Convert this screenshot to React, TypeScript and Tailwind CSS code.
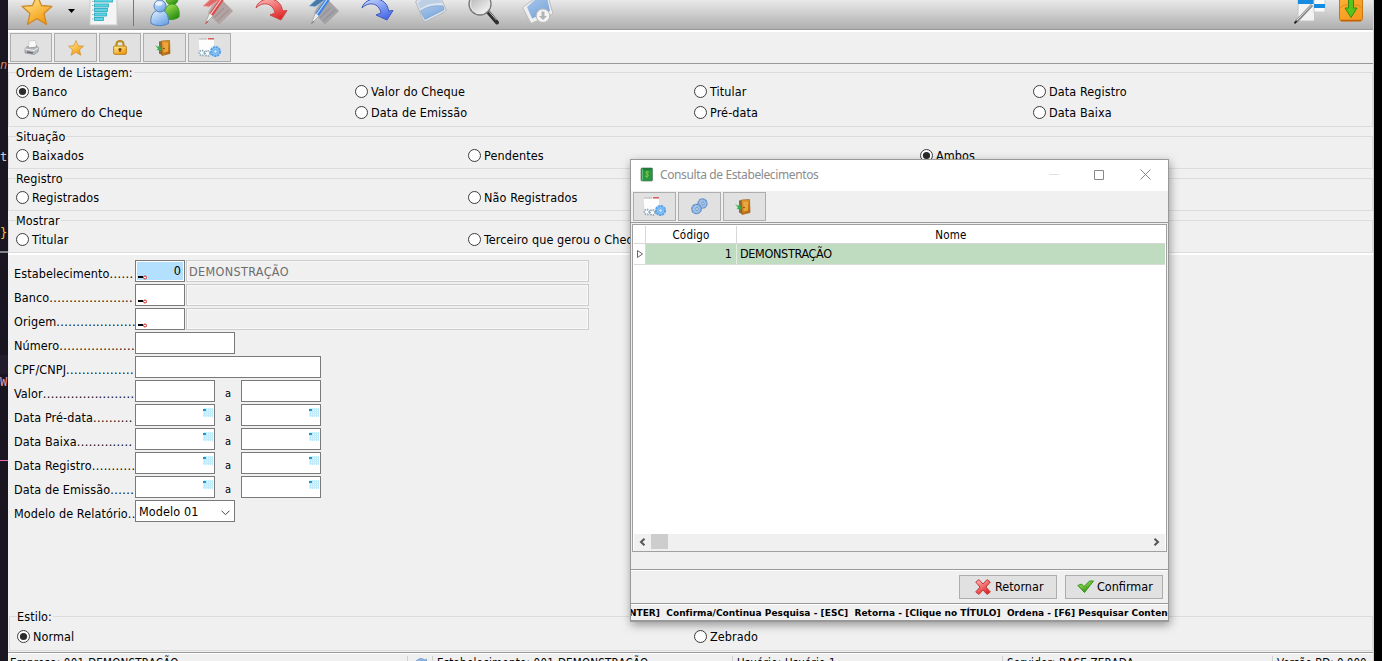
import React from "react";

type IconProps = { className?: string };

function Defs() {
  const g = (id: string, a: string, b: string) => (
    <linearGradient id={id} x1="0" y1="0" x2="0.6" y2="1">
      <stop offset="0" stopColor={a} />
      <stop offset="1" stopColor={b} />
    </linearGradient>
  );
  return (
    <svg width="0" height="0" className="absolute">
      <defs>
        {g("gold", "#fff3a0", "#f59a10")}
        {g("blue", "#eaf4ff", "#6fa6e6")}
        {g("green", "#b4ee5c", "#2a8f10")}
        {g("red", "#ffc0c0", "#e02828")}
        {g("indigo", "#c8d8ff", "#4a6ce8")}
        {g("silver", "#8f8f8f", "#ffffff")}
        {g("wood", "#f0a838", "#b86810")}
        {g("orange", "#ffb23a", "#f59a1c")}
        {g("pane", "#a9c8ec", "#7aa6da")}
      </defs>
    </svg>
  );
}

function Star({ className }: IconProps) {
  return (
    <svg viewBox="0 0 32 32" className={className}>
      <path d="M16 1 L20.5 11.5 L31 12.3 L23 19.5 L25.5 30.5 L16 24.6 L6.5 30.5 L9 19.5 L1 12.3 L11.5 11.5Z" fill="url(#gold)" stroke="#cf8a2c" strokeWidth="1.3" strokeLinejoin="round" />
    </svg>
  );
}

function BarsPage() {
  return (
    <svg width="30" height="26" viewBox="0 0 30 26">
      <rect x="1" y="-2" width="27" height="27" fill="#f4f4f4" stroke="#c9c9c9" />
      <g fill="#5cd6e4" stroke="#22a5bb" strokeWidth=".8">
        <rect x="5.500" y="-2" width="18" height="4" />
        <rect x="5.500" y="4" width="14" height="3" />
        <rect x="5.500" y="8.500" width="13" height="3" />
        <rect x="5.500" y="13" width="12" height="3" />
        <rect x="5.500" y="17.500" width="9" height="3" />
      </g>
      <path d="M3 1.500h1.500M3 5.500h1.500M3 10h1.500M3 14.500h1.500M3 19h1.500" stroke="#aaa" />
    </svg>
  );
}

function Users() {
  return (
    <svg width="32" height="27" viewBox="0 0 32 27">
      <circle cx="22" cy="-1" r="6" fill="url(#green)" stroke="#3c9a20" />
      <path d="M14 19 C13 9 18 4 22 4 C27 4 30 9 29 17 Q24 21 14 19Z" fill="url(#green)" stroke="#3c9a20" />
      <path d="M1 23.500 C0 15 4 10 10 10 C16 10 19 15 18.500 23.500 Q10 28 1 23.500Z" fill="url(#blue)" stroke="#5482bd" />
      <circle cx="10" cy="6" r="6" fill="url(#blue)" stroke="#5482bd" />
      <ellipse cx="9" cy="3.500" rx="3.500" ry="2" fill="#fff" opacity=".7" />
    </svg>
  );
}

function CardPen({ tone }: { tone: "red" | "blue" }) {
  const r = tone === "red";
  return (
    <svg width="33" height="27" viewBox="0 0 33 27">
      <path d="M6 13 L16 -4 L31 11 L17 25Z" fill={r ? "#b3a4a4" : "#a4a4a8"} stroke="#bcb6b6" />
      <path d="M12 18 L22 8 M15 21 L27 10" stroke={r ? "#a69494" : "#94949a"} strokeWidth="1.500" />
      <path d="M1 6 L12 -4 L20 -2 L7 7Z" fill={r ? "#e06a6a" : "#4878a8"} stroke={r ? "#f2b0b0" : "#a9c9e8"} />
      <path d="M22 -4 L9 15" stroke={r ? "#dc4848" : "#3d80e0"} strokeWidth="4" />
      <path d="M21.500 -4 L9 14" stroke={r ? "#ffc8c8" : "#b8dafa"} strokeWidth="1.200" />
      <path d="M7.500 13 L3 24 L11 16" fill="#ededed" stroke="#999" strokeWidth=".7" />
      <path d="M5 21 L3 24.500 L6.500 21.500" fill={r ? "#cf3030" : "#777"} />
    </svg>
  );
}

function Curl({ tone }: { tone: "red" | "indigo" }) {
  const r = tone === "red";
  return (
    <svg width="33" height="22" viewBox="0 0 33 22">
      <path d="M1 8 C4 -4 26 -5 27.500 11 L32 10.500 L26 20 L15 15 L20 13 C18 3 8 1 1 8Z" fill={r ? "url(#red)" : "url(#indigo)"} stroke={r ? "#ca4848" : "#4058b8"} strokeLinejoin="round" />
    </svg>
  );
}

function Folder() {
  return (
    <svg width="32" height="23" viewBox="0 0 32 23">
      <path d="M0.500 1.500 L8 -4 H25 L31 9.500 Q31 11 29.500 12 L11 21.500 Q9 22 8 19.500Z" fill="#dde4ec" stroke="#b4b8be" strokeLinejoin="round" />
      <path d="M3 3 L9 -3 H24 L27 3 Q14 2 5 9Z" fill="#bccfe4" />
      <path d="M5.500 11 Q15 4.500 28 6 L29 9.800 L10 19.500Z" fill="url(#pane)" stroke="#6d98cc" strokeWidth=".6" />
    </svg>
  );
}

function Magnifier() {
  return (
    <svg width="32" height="26" viewBox="0 0 32 26">
      <path d="M20 12 L29 22.500" stroke="#2f2f2f" strokeWidth="4" strokeLinecap="round" />
      <path d="M20 10.500 L28.500 20" stroke="#c8c8c8" strokeWidth="1" />
      <circle cx="12" cy="4" r="11" fill="url(#silver)" fillOpacity=".75" stroke="#777" strokeWidth="1.300" />
      <circle cx="12" cy="4" r="9.500" fill="none" stroke="#e8e8e8" strokeWidth="1" />
    </svg>
  );
}

function BoxDown() {
  return (
    <svg width="32" height="25" viewBox="0 0 32 25">
      <path d="M.5 7.500 L16 -4 H26 L31 14 L9 23.500Z" fill="#eee" stroke="#bbb" strokeLinejoin="round" />
      <path d="M5 7 L16 -3 H25 L28 11 L10 18.500Z" fill="url(#pane)" />
      <circle cx="21" cy="15.700" r="6.800" fill="#f4f4f4" stroke="#b8b8b8" />
      <path d="M19.500 11.500h3v4.500h2.500l-4 4-4-4h2.500z" fill="#b3b3b3" />
    </svg>
  );
}

function NotePen() {
  return (
    <svg width="33" height="25" viewBox="0 0 33 25">
      <rect x="4" y="-4" width="16.500" height="25" fill="#f3f3f3" stroke="#c4c4c4" />
      <rect x="4" y="0" width="16" height="4" fill="#168be0" />
      <rect x="20" y="-3" width="11" height="15" fill="#fafafa" stroke="#ccc" />
      <rect x="20" y="4" width="11" height="4" fill="#168be0" />
      <path d="M18 5 L2 22" stroke="#888" strokeWidth="3" />
      <path d="M17.500 5 L3 20" stroke="#ddd" strokeWidth="1" />
      <path d="M2.500 21 L0.500 23.500" stroke="#222" strokeWidth="2" />
    </svg>
  );
}

function BoxIn() {
  return (
    <svg width="24" height="23" viewBox="0 0 24 23">
      <rect x=".5" y="-5" width="23" height="26" rx="2.500" fill="url(#orange)" stroke="#c57818" />
      <path d="M1 8 L5 5 H19 L23 8" fill="none" stroke="#e08a18" />
      <path d="M2 20.500 H22" stroke="#c46208" fill="none" strokeWidth="1.500" />
      <path d="M9.500 -4h5V8h3.500L12 17.500 6 8h3.500z" fill="#58c51d" stroke="#35890b" />
    </svg>
  );
}

function Printer() {
  return (
    <svg width="15" height="15" viewBox="0 0 15 15">
      <path d="M5 1 L11.500 .5 L12.500 7 L4.500 8Z" fill="#fafafa" stroke="#c4c8cc" strokeWidth=".8" />
      <path d="M1 8.500 L4 6 L4.500 8 L12.500 7 V5.500 L14.500 8 L14 12 L10 14.500 L1 13Z" fill="#b4b8bd" stroke="#8c8c8c" strokeWidth=".6" />
      <path d="M1 9 L10 10.500 L14 8" stroke="#f4f4f4" fill="none" />
      <path d="M3 12 L9 13" stroke="#6c6c6c" strokeWidth="1.300" />
    </svg>
  );
}

function Padlock() {
  return (
    <svg width="14" height="15" viewBox="0 0 14 15">
      <path d="M3.500 7V4a3.500 3 0 0 1 7 0v3" fill="none" stroke="#b98a18" strokeWidth="2" />
      <rect x=".7" y="6" width="12.600" height="8.300" rx="1" fill="url(#gold)" stroke="#b98018" />
      <path d="M7 8v4M5.500 9.500h3" stroke="#5b4310" strokeWidth="1.300" />
    </svg>
  );
}

function Door() {
  return (
    <svg width="16" height="16" viewBox="0 0 16 16" className="-ml-1">
      <path d="M4 1.500 L7 1 V15 L4 13.500Z" fill="#8a6a36" />
      <path d="M6.500 1 L14.500 .5 L15 13.500 L7 15.500Z" fill="url(#wood)" stroke="#9c6112" strokeWidth=".7" />
      <path d="M8.500 3 L13 2.500 V11.500 L8.500 12.500Z" fill="#eca63c" />
      <circle cx="9" cy="8.500" r=".8" fill="#6a430b" />
      <path d="M0 5 L2.800 6.800 L5 5.500 L6.500 10.500 L1.500 10 L3 8.800Z" fill="#35b04a" />
    </svg>
  );
}

function WindowGears() {
  return (
    <svg width="26" height="20" viewBox="0 0 26 20" className="-ml-px">
      <path d="M2 1 H18.500 V13 H3Z" fill="#fdfdfd" stroke="#d4d4d4" strokeWidth=".6" />
      <path d="M3 1 H11" stroke="#bbb" strokeWidth="1" />
      <rect x="12" y="0" width="6" height="1.500" fill="#d85d5d" />
      <circle cx="6" cy="15" r="2.500" fill="#fff" stroke="#8aa9bb" strokeDasharray="1.300 1" strokeWidth="2" />
      <circle cx="11.500" cy="15.500" r="2.500" fill="#fff" stroke="#8aa9bb" strokeDasharray="1.300 1" strokeWidth="2" />
      <circle cx="19.500" cy="13.500" r="4.500" fill="#8cc6f6" stroke="#5ba4ea" strokeDasharray="2.400 .6" strokeWidth="2.200" />
      <circle cx="19.500" cy="13.500" r="1.800" fill="#d4edff" stroke="#4b9de5" strokeWidth=".8" />
    </svg>
  );
}

function TwoGears() {
  return (
    <svg width="17" height="17" viewBox="0 0 17 17">
      <ellipse cx="11.500" cy="5.500" rx="4.500" ry="4.700" fill="#9cc0ea" stroke="#6a94c8" strokeDasharray="3 .4" strokeWidth="1.300" />
      <ellipse cx="5.500" cy="11" rx="4.700" ry="4.700" fill="#9cc2ec" stroke="#5f8dc2" strokeDasharray="3 .4" strokeWidth="1.300" />
      <ellipse cx="12" cy="5.500" rx="1" ry="1.600" fill="#e1ecf6" stroke="#52749c" strokeWidth=".6" />
      <ellipse cx="6" cy="11" rx="1.100" ry="1.700" fill="#e1ecf6" stroke="#52749c" strokeWidth=".6" />
    </svg>
  );
}

function Radio({ label, on }: { label: string; on?: boolean }) {
  return (
    <span className="flex h-[21px] items-center gap-[3px] whitespace-nowrap">
      <svg width="13" height="13" viewBox="0 0 13 13" className="shrink-0">
        <circle cx="6.500" cy="6.500" r="6" fill="#fff" stroke="#3c3c3c" strokeWidth="1" />
        {on && <circle cx="6.500" cy="6.500" r="3.600" fill="#2b2b2b" />}
      </svg>
      <span className="pt-px">{label}</span>
    </span>
  );
}

function Group({ legend, className, children }: { legend: string; className: string; children: React.ReactNode }) {
  return (
    <section className={"shrink-0 border border-[#dcdcdc] " + className}>
      <div className="-mt-[9px] ml-[7px] h-[17px] w-fit bg-[#f0f0f0] pr-px leading-[17px]">{legend}</div>
      {children}
    </section>
  );
}

function ToolButton({ className, children }: { className: string; children: React.ReactNode }) {
  return (
    <button className={"flex h-[29px] shrink-0 items-center justify-center border border-[#adadad] bg-[#e1e1e1] " + className}>{children}</button>
  );
}

function Row({ label, dots, children }: { label: string; dots: number; children: React.ReactNode }) {
  return (
    <div className="flex h-[22px] items-start">
      <div className="mt-[4px] flex w-[121px] shrink-0 whitespace-nowrap leading-[19px]">
        <span>{label}</span>
        <span className="tracking-[0.42px]">{".".repeat(dots)}</span>
      </div>
      {children}
    </div>
  );
}

const box = "h-[22px] shrink-0 border border-[#7a7a7a] bg-white ";

function LookupMark() {
  return (
    <svg width="10" height="5" viewBox="0 0 10 5">
      <rect x="0" y="1" width="5" height="2" fill="#000" />
      <circle cx="7" cy="2.500" r="1.500" fill="#fff" stroke="#e02020" />
    </svg>
  );
}

function Lookup({ value, active, text }: { value?: string; active?: boolean; text?: string }) {
  return (
    <>
      <div className={box + "flex w-[50px] p-px"}>
        <div className={"flex flex-1 items-end justify-between pl-px pr-[2px] " + (active ? "bg-[#b3e0ff]" : "bg-white")}>
          <LookupMark />
          <span className="self-center pt-px">{value}</span>
        </div>
      </div>
      <div className="ml-px h-[22px] w-[403px] border border-[#cccccc] bg-[#f0f0f0] pl-[2px] leading-[21px] tracking-[0.35px] text-[#6d6d6d] shadow-[inset_0_0_0_1px_#f8f8f8]">{text}</div>
    </>
  );
}

function CalendarMark() {
  return (
    <svg width="10" height="9" viewBox="0 0 10 9">
      <rect width="10" height="9" fill="#e9f9ff" />
      <path d="M0 3.500H10M0 5.500H10M0 7.500H10M1.500 0V9M3.500 0V9M5.500 0V9M7.500 0V9M9.500 0V9" stroke="#bfeafa" />
      <rect y="1" width="3" height="2" fill="#1d97df" />
      <rect x="3" y="1" width="7" height="1" fill="#bfeafa" />
    </svg>
  );
}

function Range({ calendar }: { calendar?: boolean }) {
  const cell = (
    <div className={box + "flex w-[80px] items-start justify-end pr-px pt-[3px]"}>{calendar && <CalendarMark />}</div>
  );
  return (
    <>
      {cell}
      <span className="w-[26px] pt-[5px] text-center text-[11px] leading-[17px]">a</span>
      {cell}
    </>
  );
}

function Background() {
  return (
    <aside className="flex w-2 shrink-0 flex-col overflow-hidden bg-[#1a1621] font-['DejaVu_Sans_Mono',monospace] text-[12px] leading-[14px]">
      <span className="mt-[58px] italic text-[#d98758]">n.</span>
      <span className="mt-[78px] text-[#cdcdd8]">to</span>
      <span className="mt-[62px] text-[#e7cc2e]">{"}"}</span>
      <span className="mt-[11px] h-[2px] bg-[#85838a]" />
      <span className="mt-[102px] h-[19px] bg-[#211d2c]" />
      <span className="mt-px text-[#e999b4]">W</span>
      <span className="mt-[71px] h-px shrink-0 bg-[#ee68b5]" />
    </aside>
  );
}

function Dialog() {
  return (
    <div className="absolute left-[630px] top-[159px] flex h-[463px] w-[539px] flex-col border border-b-2 border-[#999] bg-[#f0f0f0] shadow-[1px_3px_9px_rgba(0,0,0,0.38)]">
      <header className="flex h-[31px] shrink-0 items-center bg-white pb-px pl-[9px] text-[#8c8c8c]">
        <svg width="13" height="15" viewBox="0 0 13 15" className="-mt-px">
          <rect x="1" y="1" width="11.500" height="13" rx="1" fill="#259845" stroke="#55785a" strokeWidth=".7" />
          <path d="M2.500 13.500V2" stroke="#65bc73" />
          <path d="M3 2H12" stroke="#17602c" />
          <path d="M9 5.500 C7 3.500 4.500 6 7 7 C10 8 7.500 10.500 5 9M7 4V11" fill="none" stroke="#8fc23c" strokeWidth="1" />
        </svg>
        <span className="ml-[7px] font-['Noto_Sans',sans-serif] text-[12px] tracking-[-0.38px]">Consulta de Estabelecimentos</span>
        <svg width="10" height="11" className="ml-auto"><path d="M0 4.500H10" stroke="#e2e2e2" /></svg>
        <svg width="10" height="10" className="ml-[35px] mt-[-1px]"><path d="M.5.5H9.500V9.500H.5Z" fill="none" stroke="#888" /></svg>
        <svg width="11" height="11" className="ml-[36px] mr-[17px] mt-[-1px]"><path d="M.5.5 L10.500 10.500M10.500.5L.5 10.500" fill="none" stroke="#888" /></svg>
      </header>
      <div className="flex h-[32px] shrink-0 gap-[2px] border-b border-[#999] pl-[2px] pt-px">
        <ToolButton className="w-[43px]"><WindowGears /></ToolButton>
        <ToolButton className="w-[43px]"><TwoGears /></ToolButton>
        <ToolButton className="w-[43px]"><Door /></ToolButton>
      </div>
      <div className="mx-px mt-px flex h-[328px] shrink-0 flex-col border border-[#a0a0a0] bg-white pl-px pr-px pt-px">
        <div className="flex h-[18px] shrink-0 border-b border-[#d6d6d6] text-[11.5px] leading-[19px] tracking-[0.2px]">
          <span className="w-[12px] border-r border-[#d8d8d8]" />
          <span className="w-[91px] border-r border-[#d8d8d8] text-center">Código</span>
          <span className="flex-1 text-center">Nome</span>
        </div>
        <div className="flex h-[21px] shrink-0 border-b border-[#d6ded6] bg-[#c0dcc0] leading-[20px]">
          <span className="flex w-[12px] items-center justify-center border-r border-[#d8d8d8] bg-white">
            <svg width="6" height="8" viewBox="0 0 6 8"><path d="M.5.5V7.500L5.500 4Z" fill="#fff" stroke="#666" /></svg>
          </span>
          <span className="w-[91px] border-r border-[#e3eee3] pr-[4px] text-right">1</span>
          <span className="pl-[3px] tracking-[-0.33px]">DEMONSTRAÇÃO</span>
        </div>
        <div className="mt-auto flex h-[17px] shrink-0 items-start bg-[#f0f0f0] px-[5px]">
          <svg width="7" height="8" viewBox="0 0 7 8" className="mt-[4px]"><path d="M5.500 .8L2 4L5.500 7.200" fill="none" stroke="#555" strokeWidth="2" /></svg>
          <span className="ml-[5px] h-[15px] w-[17px] bg-[#cdcdcd]" />
          <svg width="7" height="8" viewBox="0 0 7 8" className="ml-auto mt-[4px]"><path d="M1.500 .8L5 4L1.500 7.200" fill="none" stroke="#555" strokeWidth="2" /></svg>
        </div>
      </div>
      <div className="mt-[17px] flex h-[35px] shrink-0 justify-end gap-2 border-b border-t border-[#999] pr-[5px] pt-[5px] shadow-[inset_0_1px_0_#fff]">
        <button className="flex h-[24px] w-[98px] items-center border border-[#adadad] bg-[#e1e1e1] pl-[15px]">
          <svg width="16" height="16" viewBox="0 0 16 16" className="shrink-0">
            <path d="M.7 3L4 .6L8 5L12 .6L15.300 3L11 8L15.300 13L12 15.400L8 11L4 15.400L.7 13L5 8Z" fill="url(#red)" stroke="#c43a3a" strokeLinejoin="round" />
          </svg>
          <span className="ml-[4px] pt-px tracking-normal">Retornar</span>
        </button>
        <button className="flex h-[24px] w-[98px] items-center border border-[#adadad] bg-[#e1e1e1] pl-[11px]">
          <svg width="17" height="14" viewBox="0 0 17 14" className="shrink-0">
            <path d="M.8 5.500L4.500 4L7 6.500L12.500 1H16.500L7.500 12.500Z" fill="url(#green)" stroke="#359424" strokeLinejoin="round" />
          </svg>
          <span className="ml-[3px] pt-px tracking-normal">Confirmar</span>
        </button>
      </div>
      <div className="flex flex-1 items-center justify-center overflow-hidden whitespace-pre border-t border-white font-['DejaVu_Sans',sans-serif] text-[9px] font-bold leading-[14px] [font-stretch:normal]">
        <span className="shrink-0 tracking-[0.03px]">[ENTER]  Confirma/Continua Pesquisa - [ESC]  Retorna - [Clique no TÍTULO]  Ordena - [F6] Pesquisar Contendo</span>
      </div>
    </div>
  );
}

export default function App() {
  return (
    <div className="relative flex h-[661px] w-[1382px] overflow-hidden bg-black font-['DejaVu_Sans_Condensed','DejaVu_Sans',sans-serif] text-[12.5px] tracking-[0.1px] text-black [font-stretch:condensed]">
      <Defs />
      <Background />
      <main className="flex w-[1366px] shrink-0 flex-col border-r border-[#d0d0d0] bg-[#f0f0f0]">
        <div className="flex h-[30px] shrink-0 items-start overflow-hidden border-b border-[#999] bg-gradient-to-b from-[#e9e9e9] to-[#afafaf]">
          <Star className="-mt-[6px] ml-[13px] h-[32px] w-[32px] shrink-0" />
          <svg width="7" height="4" className="ml-[15px] mt-[9px] shrink-0"><path d="M0 0H7L3.500 4Z" fill="#000" /></svg>
          <span className="ml-[14px] shrink-0"><BarsPage /></span>
          <span className="ml-[14px] h-[26px] w-px shrink-0 bg-[#777]" />
          <span className="ml-[16px] shrink-0"><Users /></span>
          <span className="ml-[20px] shrink-0"><CardPen tone="red" /></span>
          <span className="ml-[20px] shrink-0"><Curl tone="red" /></span>
          <span className="ml-[20px] shrink-0"><CardPen tone="blue" /></span>
          <span className="ml-[20px] shrink-0"><Curl tone="indigo" /></span>
          <span className="ml-[21px] shrink-0"><Folder /></span>
          <span className="ml-[21px] shrink-0"><Magnifier /></span>
          <span className="ml-[22px] shrink-0"><BoxDown /></span>
          <span className="ml-auto shrink-0"><NotePen /></span>
          <span className="ml-[12px] mr-[10px] shrink-0"><BoxIn /></span>
        </div>
        <div className="flex h-[34px] shrink-0 gap-[2px] border-b border-t-2 border-b-[#999] border-t-white pl-[2px] pt-px">
          <ToolButton className="w-[42px]"><Printer /></ToolButton>
          <ToolButton className="w-[43px]"><Star className="h-4 w-4" /></ToolButton>
          <ToolButton className="w-[42px]"><Padlock /></ToolButton>
          <ToolButton className="w-[43px]"><Door /></ToolButton>
          <ToolButton className="w-[43px]"><WindowGears /></ToolButton>
        </div>
        <Group legend="Ordem de Listagem:" className="mt-[8px] h-[55px]">
          <div className="grid grid-cols-[339px_339px_339px_339px] pl-[7px]">
            <Radio label="Banco" on />
            <Radio label="Valor do Cheque" />
            <Radio label="Titular" />
            <Radio label="Data Registro" />
            <Radio label="Número do Cheque" />
            <Radio label="Data de Emissão" />
            <Radio label="Pré-data" />
            <Radio label="Data Baixa" />
          </div>
        </Group>
        <Group legend="Situação" className="mt-[9px] h-[33px]">
          <div className="grid grid-cols-[452px_452px_452px] pl-[7px]">
            <Radio label="Baixados" />
            <Radio label="Pendentes" />
            <Radio label="Ambos" on />
          </div>
        </Group>
        <Group legend="Registro" className="mt-[9px] h-[33px]">
          <div className="grid grid-cols-[452px_452px_452px] pl-[7px]">
            <Radio label="Registrados" />
            <Radio label="Não Registrados" />
          </div>
        </Group>
        <Group legend="Mostrar" className="mt-[9px] h-[33px]">
          <div className="grid grid-cols-[452px_452px_452px] pl-[7px]">
            <Radio label="Titular" />
            <Radio label="Terceiro que gerou o Cheque" />
          </div>
        </Group>
        <div className="flex h-[363px] shrink-0 flex-col gap-[2px] border-t-2 border-white pl-[6px] pt-[5px]">
          <Row label="Estabelecimento" dots={6}><Lookup value="0" active text="DEMONSTRAÇÃO" /></Row>
          <Row label="Banco" dots={21}><Lookup /></Row>
          <Row label="Origem" dots={20}><Lookup /></Row>
          <Row label="Número" dots={19}><div className={box + "w-[100px]"} /></Row>
          <Row label="CPF/CNPJ" dots={17}><div className={box + "w-[186px]"} /></Row>
          <Row label="Valor" dots={23}><Range /></Row>
          <Row label="Data Pré-data" dots={10}><Range calendar /></Row>
          <Row label="Data Baixa" dots={14}><Range calendar /></Row>
          <Row label="Data Registro" dots={11}><Range calendar /></Row>
          <Row label="Data de Emissão" dots={6}><Range calendar /></Row>
          <Row label="Modelo de Relatório" dots={2}>
            <div className={box + "flex w-[100px] items-center justify-between pl-[3px] pr-[4px] pt-[3px]"}>
              <span>Modelo 01</span>
              <svg width="9" height="6" viewBox="0 0 9 6"><path d="M.5.700L4.500 4.700L8.500.7" fill="none" stroke="#444" /></svg>
            </div>
          </Row>
        </div>
        <Group legend="Estilo:" className="ml-px h-[35px]">
          <div className="grid grid-cols-[677px_677px] pl-[7px] pt-px">
            <Radio label="Normal" on />
            <Radio label="Zebrado" />
          </div>
        </Group>
        <footer className="mt-px flex h-[9px] shrink-0 overflow-hidden border-t border-[#999] pt-[3px] text-[11.5px] leading-[15px] tracking-[0.2px] shadow-[inset_0_1px_0_#fff]">
          <span className="w-[400px] shrink-0 whitespace-pre border-r border-[#d0d0d0] pl-[2px]">Empresa: 001-DEMONSTRAÇÃO</span>
          <span className="flex w-[25px] shrink-0 justify-center border-r border-[#d0d0d0]">
            <svg width="13" height="13" viewBox="0 0 13 13"><path d="M1 6Q6 0 11 4L13 3V8H8L10 6Q6 3 2 8Z" fill="#91b4df" stroke="#6d94c8" strokeWidth=".7" /></svg>
          </span>
          <span className="w-[300px] shrink-0 border-r border-[#d0d0d0] pl-[4px]">Estabelecimento: 001-DEMONSTRAÇÃO</span>
          <span className="w-[270px] shrink-0 border-r border-[#d0d0d0] pl-[4px]">Usuário: Usuário 1</span>
          <span className="w-[270px] shrink-0 border-r border-[#d0d0d0] pl-[4px]">Servidor: BASE ZERADA</span>
          <span className="whitespace-nowrap pl-[4px] tracking-normal">Versão BD: 0.000</span>
        </footer>
      </main>
      <Dialog />
    </div>
  );
}
